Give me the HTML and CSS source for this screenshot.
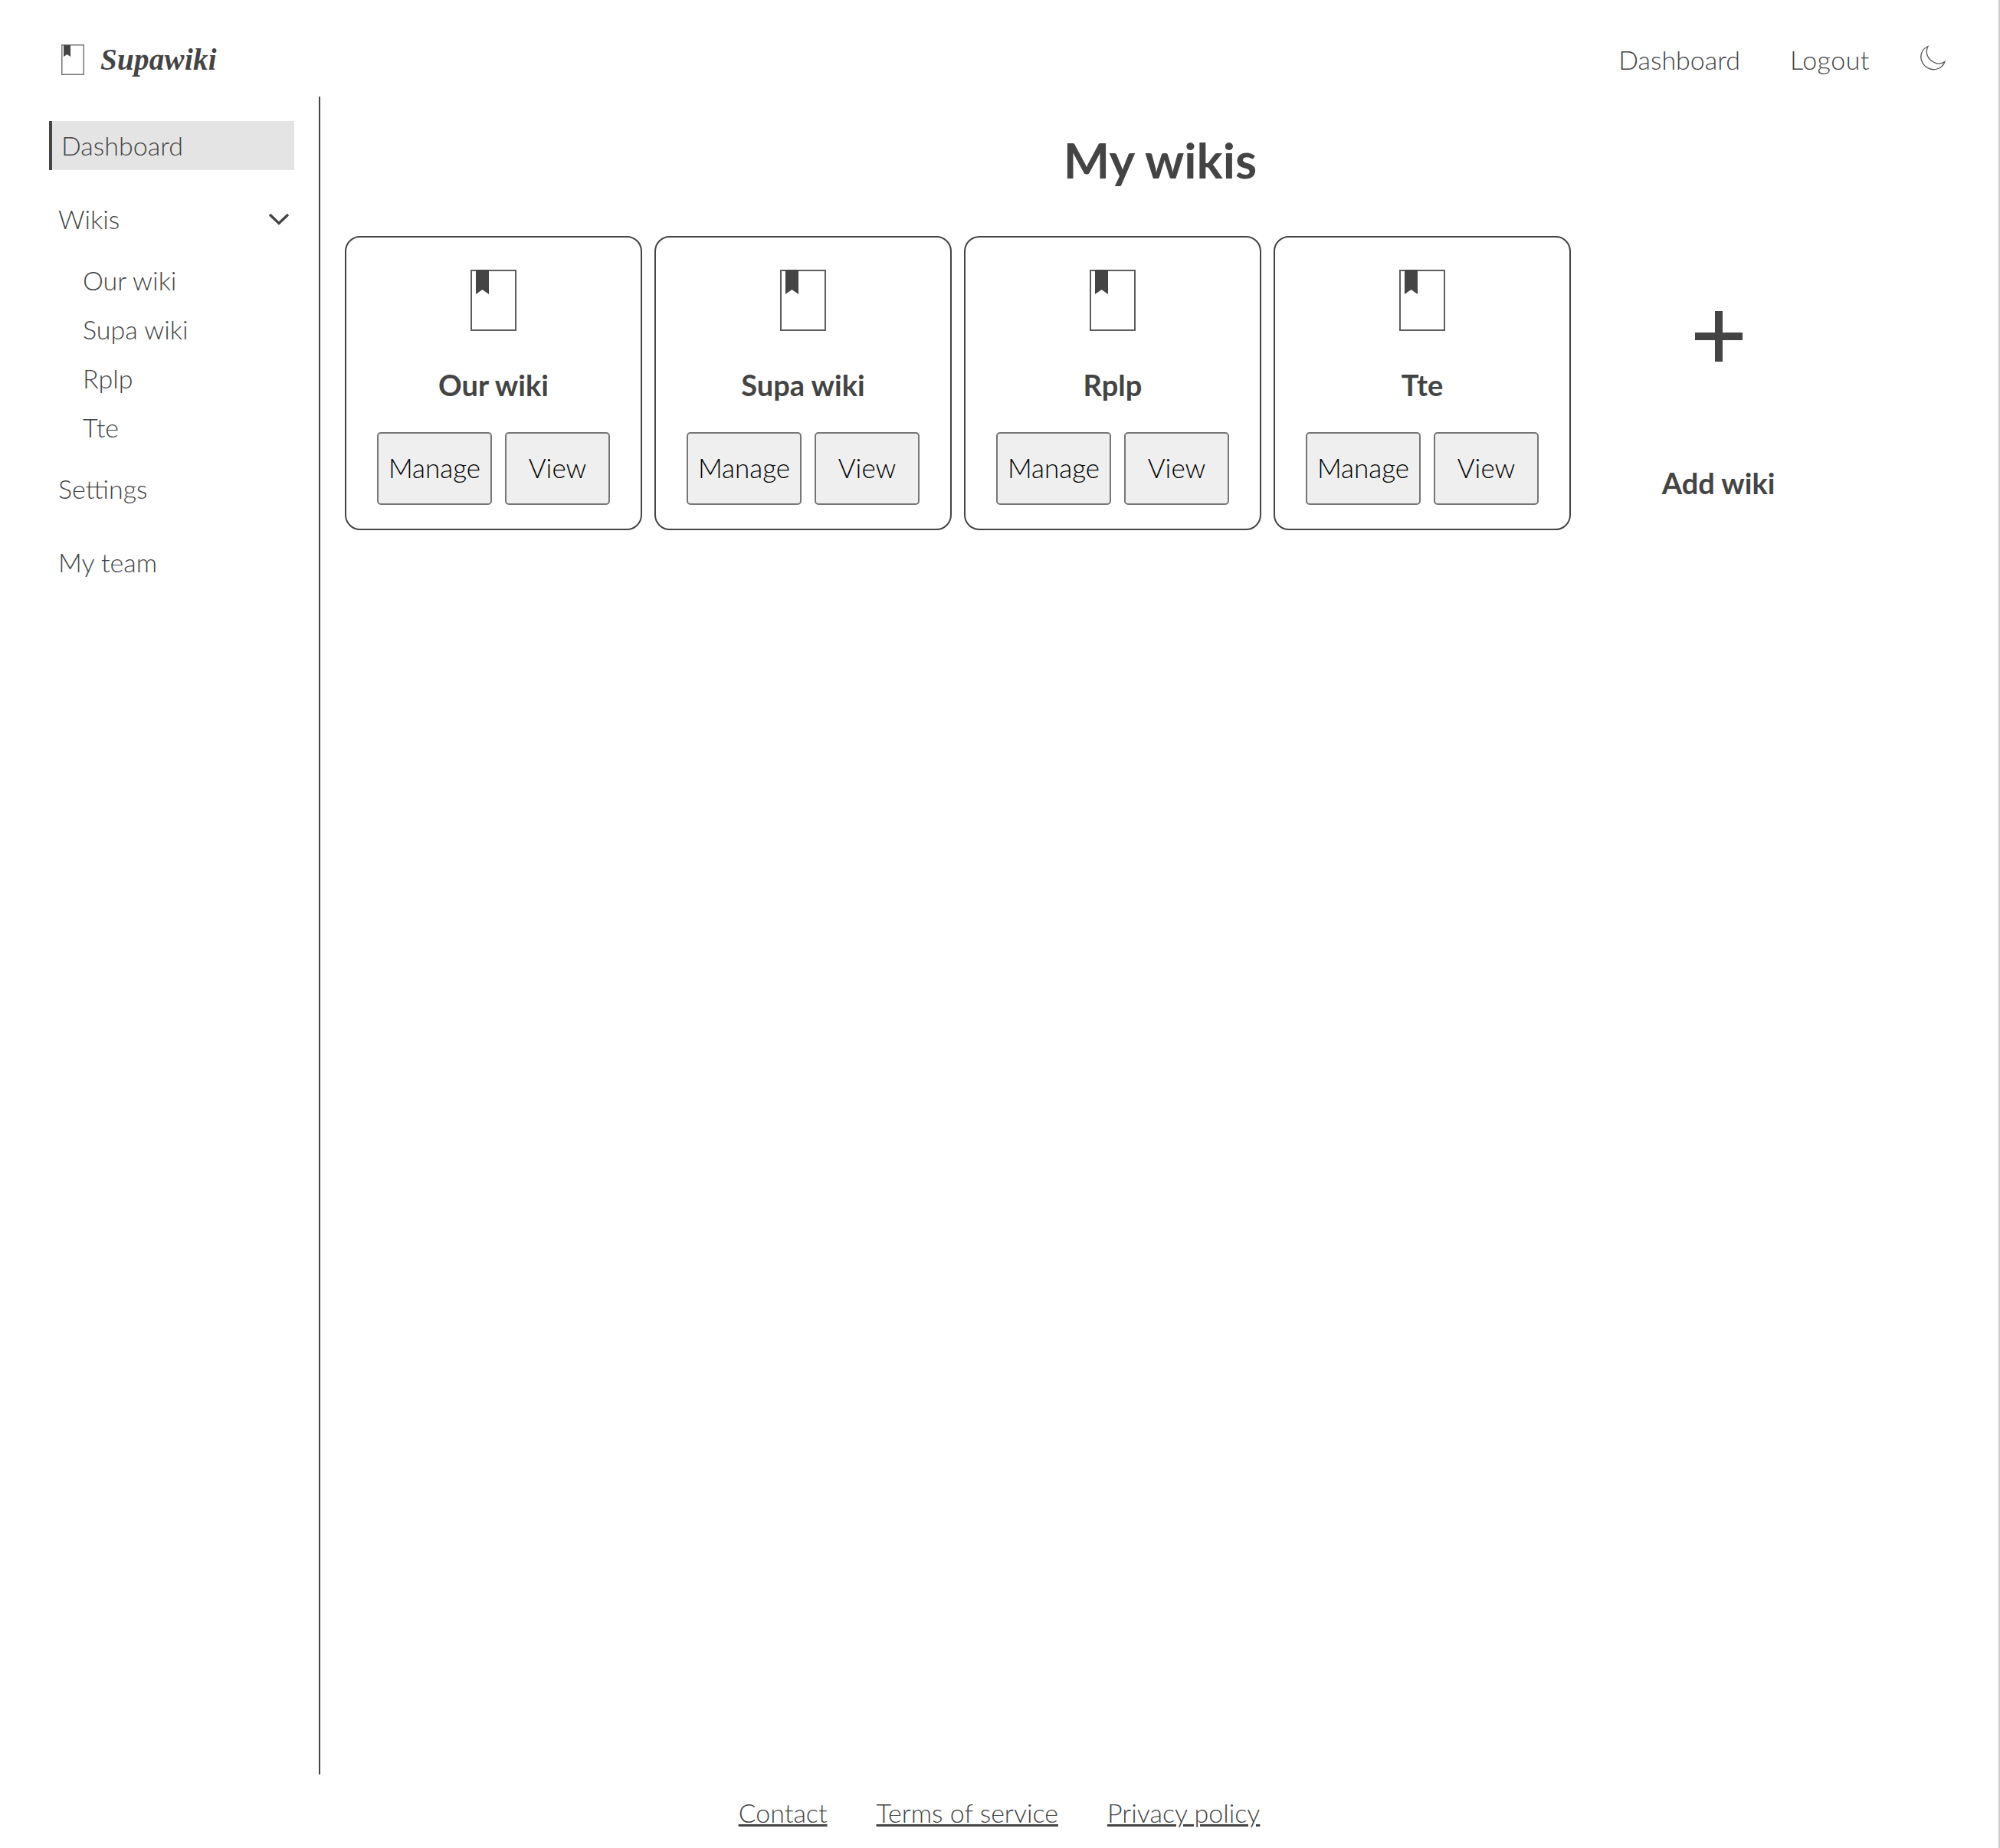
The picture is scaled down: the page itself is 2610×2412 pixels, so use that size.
FILE: index.html
```html
<!DOCTYPE html>
<html lang="en">
<head>
<meta charset="utf-8">
<title>Supawiki</title>
<link rel="stylesheet" href="styles.css">
</head>
<body>
<header class="topbar">
  <a class="brand" href="#">
    <svg class="brand-icon" viewBox="0 0 30 40"><rect x="0.75" y="0.75" width="28.5" height="38.5" fill="#fff" stroke="#757575" stroke-width="1.5"/><path d="M3 1H12V16L7.500 13L3 16Z" fill="#444"/></svg>
    <span class="brand-name">Supawiki</span>
  </a>
  <nav class="topnav">
    <a href="#">Dashboard</a>
    <a class="logout" href="#">Logout</a>
    <svg class="moon" viewBox="0 0 34 34"><path d="M11 1.500C3.500 4.500 0 13 2.800 20.500C6 29 15 33.500 23 31C28 29.500 31.500 26 33 21.500C29.500 24 24 24.800 19 22.500C10.500 18.500 7 9.500 11 1.500Z" fill="none" stroke="#555" stroke-width="1.300"/></svg>
  </nav>
</header>
<div class="shell">
  <aside class="sidebar">
    <a class="side-item active" href="#">Dashboard</a>
    <div class="side-item wikis">
      <span>Wikis</span>
      <svg class="chevron" viewBox="0 0 28 16"><path d="M2 2L14 13.500L26 2" fill="none" stroke="#444" stroke-width="3.400"/></svg>
    </div>
    <ul class="sublist">
      <li><a href="#">Our wiki</a></li>
      <li><a href="#">Supa wiki</a></li>
      <li><a href="#">Rplp</a></li>
      <li><a href="#">Tte</a></li>
    </ul>
    <a class="side-item" href="#">Settings</a>
    <a class="side-item" href="#">My team</a>
  </aside>
  <main class="content">
    <h1 class="title">My wikis</h1>
    <div class="cards">
      <article class="card">
        <svg class="book" viewBox="0 0 60 80"><rect x="1" y="1" width="58" height="78" fill="#fff" stroke="#5c5c5c" stroke-width="2"/><path d="M7 0H24V32L15.500 26L7 32Z" fill="#444"/></svg>
        <h2 class="card-title">Our wiki</h2>
        <div class="actions"><button class="btn manage">Manage</button><button class="btn view">View</button></div>
      </article>
      <article class="card">
        <svg class="book" viewBox="0 0 60 80"><rect x="1" y="1" width="58" height="78" fill="#fff" stroke="#5c5c5c" stroke-width="2"/><path d="M7 0H24V32L15.500 26L7 32Z" fill="#444"/></svg>
        <h2 class="card-title">Supa wiki</h2>
        <div class="actions"><button class="btn manage">Manage</button><button class="btn view">View</button></div>
      </article>
      <article class="card">
        <svg class="book" viewBox="0 0 60 80"><rect x="1" y="1" width="58" height="78" fill="#fff" stroke="#5c5c5c" stroke-width="2"/><path d="M7 0H24V32L15.500 26L7 32Z" fill="#444"/></svg>
        <h2 class="card-title">Rplp</h2>
        <div class="actions"><button class="btn manage">Manage</button><button class="btn view">View</button></div>
      </article>
      <article class="card">
        <svg class="book" viewBox="0 0 60 80"><rect x="1" y="1" width="58" height="78" fill="#fff" stroke="#5c5c5c" stroke-width="2"/><path d="M7 0H24V32L15.500 26L7 32Z" fill="#444"/></svg>
        <h2 class="card-title">Tte</h2>
        <div class="actions"><button class="btn manage">Manage</button><button class="btn view">View</button></div>
      </article>
      <a class="add" href="#">
        <svg class="plus" viewBox="0 0 62 66"><path d="M26 0H36V28H62V38H36V66H26V38H0V28H26Z" fill="#444"/></svg>
        <span class="add-label">Add wiki</span>
      </a>
    </div>
  </main>
</div>
<footer class="footer">
  <a href="#">Contact</a>
  <a href="#">Terms of service</a>
  <a href="#">Privacy policy</a>
</footer>
</body>
</html>
```

FILE: styles.css
```css
* { box-sizing: border-box; }
html, body { margin: 0; height: 100%; }
body {
  height: 2412px;
  display: flex;
  flex-direction: column;
  background: #fff;
  color: #444;
  font-family: "Lato", "Liberation Sans", sans-serif;
  font-weight: 300;
  font-size: 34px;
  overflow: hidden;
  border-right: 2px solid #cbcbcb;
}
a { color: inherit; text-decoration: none; }
.topbar {
  height: 126px;
  flex: none;
  display: flex;
  justify-content: space-between;
  align-items: center;
  padding: 30px 69px 0 80px;
}
.brand { display: flex; align-items: center; gap: 21px; }
.brand-icon { width: 30px; height: 40px; display: block; }
.brand-name {
  font-family: "Liberation Serif", serif;
  font-style: italic;
  font-weight: 700;
  font-size: 39px;
  letter-spacing: 0.3px;
  margin-bottom: 2px;
}
.topnav { display: flex; align-items: center; gap: 65px; }
.topnav a { padding-bottom: 2px; }
.logout { letter-spacing: 0.5px; }
.moon { width: 34px; height: 34px; display: block; margin-top: -5px; }
.shell { flex: 1; display: flex; min-height: 0; }
.sidebar {
  width: 418px;
  flex: none;
  height: 2190px;
  border-right: 2px solid #444;
  padding: 32px 32px 0 64px;
}
.side-item {
  display: flex;
  align-items: center;
  height: 64px;
  padding-left: 12px;
  padding-bottom: 2px;
  margin-bottom: 32px;
}
.side-item.active {
  background: #e4e4e4;
  border-left: 4px solid #444;
  padding-left: 12px;
}
.wikis { justify-content: space-between; padding-right: 6px; margin-bottom: 16px; }
.chevron { width: 28px; height: 16px; display: block; margin-top: 2px; }
.sublist { list-style: none; margin: 0 0 16px; padding: 0 0 0 44px; }
.sublist li { height: 64px; display: flex; align-items: center; padding-bottom: 2px; }
.content { flex: 1; min-width: 0; padding: 0 0 0 32px; }
.title {
  margin: 41px 0 58px;
  height: 83px;
  line-height: 83px;
  text-align: center;
  font-family: "Lato", "Noto Sans", sans-serif;
  font-weight: 700;
  font-size: 64px;
  color: #444;
  padding-right: 30px;
}
.cards { display: flex; gap: 16px; align-items: stretch; }
.card {
  width: 388px;
  height: 384px;
  border: 2px solid #444;
  border-radius: 20px;
  display: flex;
  flex-direction: column;
  align-items: center;
  padding-top: 42px;
}
.book { width: 60px; height: 80px; display: block; flex: none; }
.card-title {
  margin: 44px 0 0;
  height: 52px;
  line-height: 52px;
  font-family: "Lato", "Noto Sans", sans-serif;
  font-weight: 700;
  font-size: 38px;
  color: #444;
}
.actions { display: flex; gap: 17px; margin-top: 36px; }
.btn {
  height: 95px;
  padding: 0 0 4px;
  background: #efefef;
  border: 2px solid #767676;
  border-radius: 5px;
  font-family: inherit;
  font-weight: 300;
  font-size: 35px;
  color: #000;
}
.manage { width: 150px; }
.view { width: 137px; }
.add {
  flex: 1;
  max-width: 353px;
  display: flex;
  flex-direction: column;
  align-items: center;
  padding-top: 98px;
}
.plus { width: 62px; height: 66px; display: block; }
.add-label {
  margin-top: 133px;
  font-family: "Lato", "Noto Sans", sans-serif;
  font-weight: 700;
  font-size: 38px;
  line-height: 50px;
}
.footer {
  height: 96px;
  flex: none;
  display: flex;
  justify-content: center;
  gap: 64px;
  padding-top: 31px;
}
.footer a { text-decoration: underline; line-height: 38px; height: 38px; }
```
